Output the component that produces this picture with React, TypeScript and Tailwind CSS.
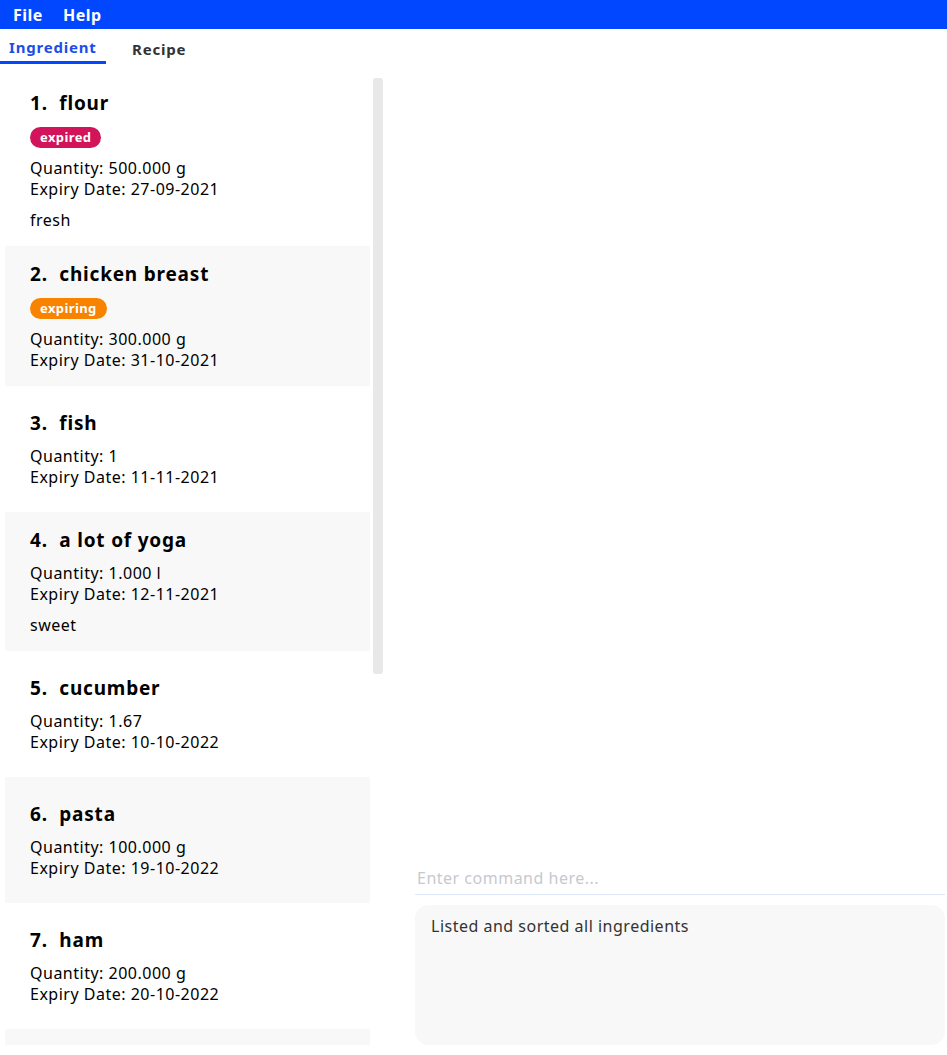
import React from "react";

type Item = {
  name: string;
  badge?: "expired" | "expiring";
  qty: string;
  exp: string;
  tag?: string;
};

const items: Item[] = [
  { name: "flour", badge: "expired", qty: "500.000 g", exp: "27-09-2021", tag: "fresh" },
  { name: "chicken breast", badge: "expiring", qty: "300.000 g", exp: "31-10-2021" },
  { name: "fish", qty: "1", exp: "11-11-2021" },
  { name: "a lot of yoga", qty: "1.000 l", exp: "12-11-2021", tag: "sweet" },
  { name: "cucumber", qty: "1.67", exp: "10-10-2022" },
  { name: "pasta", qty: "100.000 g", exp: "19-10-2022" },
  { name: "ham", qty: "200.000 g", exp: "20-10-2022" },
];

function Card({ item, index }: { item: Item; index: number }) {
  const bg = index % 2 === 0 ? "bg-white" : "bg-[#f8f8f8]";
  return (
    <div className={`${bg} shrink-0 min-h-[126px] pl-[25px] pr-4 pt-[16px] pb-[15px] flex flex-col justify-center`}>
      <div className="text-[19px] leading-[24px] font-bold tracking-[0.8px] text-black whitespace-pre">
        {index + 1}.{"  "}{item.name}
      </div>
      {item.badge && (
        <div className="mt-[12px] flex">
          <span
            className={`${
              item.badge === "expired" ? "bg-[#d2145a]" : "bg-[#f78300]"
            } text-white text-[13px] font-bold tracking-[0.4px] leading-[21px] h-[21px] px-[10px] rounded-full`}
          >
            {item.badge}
          </span>
        </div>
      )}
      <div className={`${item.badge ? "mt-[10px]" : "mt-[11px]"} text-[16px] tracking-[0.5px] leading-[21px] text-black`}>
        <div>Quantity: {item.qty}</div>
        <div>Expiry Date: {item.exp}</div>
      </div>
      {item.tag && <div className="mt-[10px] text-[16px] tracking-[0.5px] leading-[21px] text-black">{item.tag}</div>}
    </div>
  );
}

export default function App() {
  return (
    <div
      className="w-[947px] h-[1055px] overflow-hidden bg-white flex flex-col"
      style={{ fontFamily: '"Noto Sans", "Open Sans", sans-serif' }}
    >
      <div className="h-[29px] shrink-0 bg-[#0047ff] flex items-center gap-[20px] pl-[13px] text-white font-bold text-[16px] tracking-[0.5px]">
        <span>File</span>
        <span>Help</span>
      </div>
      <div className="h-[35px] shrink-0 flex items-end">
        <div className="w-[106px] h-[35px] flex flex-col">
          <div className="flex-1 flex items-center pl-[9px] pt-[4px] text-[15px] font-bold tracking-[0.8px] text-[#1b4ee6]">Ingredient</div>
          <div className="h-[3px] bg-[#0047ff]" />
        </div>
        <div className="h-[35px] flex items-center pl-[26px] pt-[5px] text-[15px] font-bold tracking-[0.8px] text-[#333333]">Recipe</div>
      </div>
      <div className="flex-1 flex min-h-0 pt-[11px] pb-[10px]">
        <div className="ml-[5px] w-[365px] shrink-0 flex flex-col overflow-hidden">
          {items.map((it, i) => (
            <Card key={i} item={it} index={i} />
          ))}
          <div className="shrink-0 h-[126px] bg-[#f8f8f8]" />
        </div>
        <div className="ml-[3px] mt-[3px] w-[10px] h-[596px] shrink-0 rounded-[3px] bg-[#e8e8e8]" />
        <div className="flex-1 flex flex-col justify-end pl-[32px] pr-[2px]">
          <div className="h-[33px] border-b border-[#dfe8f7] flex items-center pl-[2px] text-[16px] tracking-[0.5px] text-[#c8c8cf]">
            Enter command here...
          </div>
          <div className="mt-[10px] h-[140px] rounded-[14px] bg-[#f8f8f8] px-[16px] py-[10px] text-[16px] tracking-[0.5px] leading-[22px] text-[#333333]">
            Listed and sorted all ingredients
          </div>
        </div>
      </div>
    </div>
  );
}
